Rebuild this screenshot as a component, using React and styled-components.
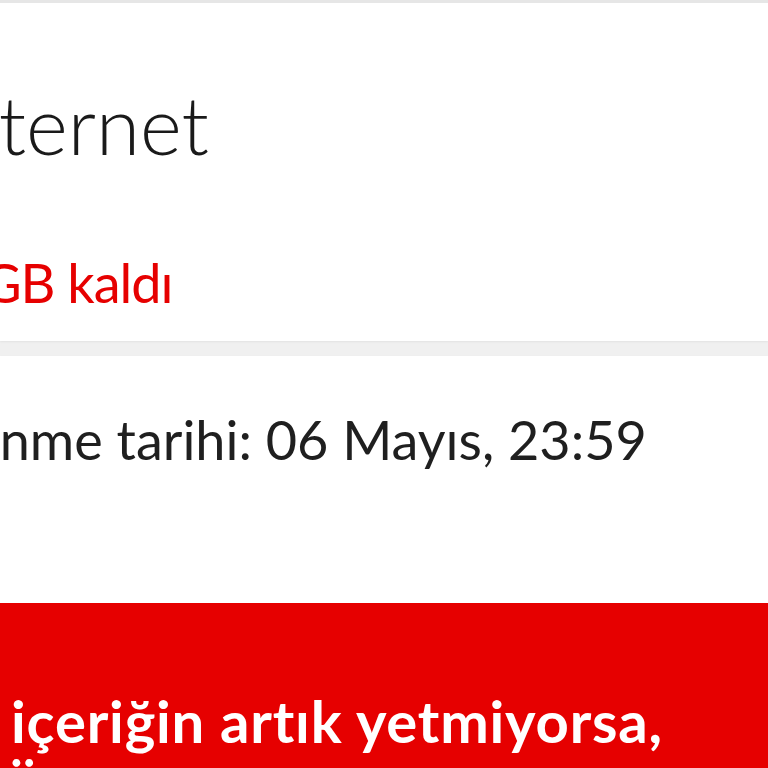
import styled, { createGlobalStyle } from "styled-components";

const Global = createGlobalStyle`
  html, body {
    margin: 0;
    padding: 0;
    background: #f0f0f0;
  }
  body {
    font-family: Lato, "Open Sans", sans-serif;
    font-variant-ligatures: none;
    overflow: hidden;
  }
`;

const Viewport = styled.div`
  width: 768px;
  height: 768px;
  overflow: hidden;
  background: #f0f0f0;
  border-top: 3px solid #e6e6e6;
  box-sizing: border-box;
`;

const Card = styled.section`
  background: #ffffff;
  padding: ${(p) => p.$pad};
  box-shadow: 0 1px 2px rgba(0, 0, 0, 0.06);
  margin-bottom: ${(p) => p.$gap || "0px"};
`;

const Title = styled.h1`
  margin: 0 0 0 ${(p) => p.$shift};
  font-size: 80px;
  line-height: 1;
  font-weight: 300;
  color: #1a1a1a;
  white-space: nowrap;
`;

const Remaining = styled.p`
  margin: 92px 0 0 ${(p) => p.$shift};
  font-size: 54px;
  line-height: 1;
  letter-spacing: -1px;
  font-weight: 400;
  color: #e60000;
  white-space: nowrap;
`;

const DateLine = styled.p`
  margin: 0 0 0 ${(p) => p.$shift};
  font-size: 54px;
  line-height: 1;
  font-weight: 400;
  color: #1f1f1f;
  white-space: nowrap;
`;

const Banner = styled.section`
  background: #e60000;
  padding: 84px 0 40px;
  min-height: 200px;
`;

const BannerText = styled.p`
  margin: 0 0 0 ${(p) => p.$shift};
  width: 900px;
  font-size: 58px;
  line-height: 68px;
  letter-spacing: 0.8px;
  font-weight: 700;
  color: #ffffff;
`;

export default function App() {
  return (
    <>
      <Global />
      <Viewport>
        <Card $pad="81px 0 31px" $gap="15px">
          <Title $shift="-65px">İnternet</Title>
          <Remaining $shift="-61px">5 GB kaldı</Remaining>
        </Card>
        <Card $pad="57px 0 136px">
          <DateLine $shift="-141px">Yenilenme tarihi: 06 Mayıs, 23:59</DateLine>
        </Card>
        <Banner>
          <BannerText $shift="-154px">
            Paket içeriğin artık yetmiyorsa, şimdi Üst Pakete Geç!
          </BannerText>
        </Banner>
      </Viewport>
    </>
  );
}
